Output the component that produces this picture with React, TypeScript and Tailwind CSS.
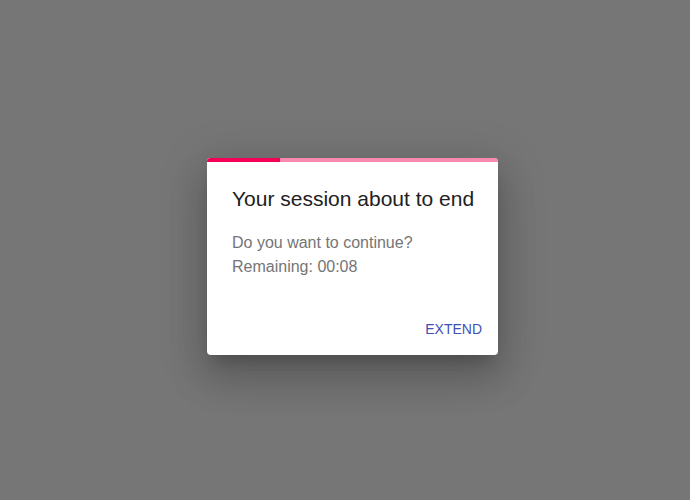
import React from 'react';

const SessionDialog: React.FC<{ remaining: string; progress: number }> = ({ remaining, progress }) => (
    <div className="w-[291px] bg-white rounded overflow-hidden shadow-[0_11px_15px_-7px_rgba(0,0,0,0.2),0_24px_38px_3px_rgba(0,0,0,0.14),0_9px_46px_8px_rgba(0,0,0,0.12)]">
        <div className="h-1 bg-[#f88ab0]">
            <div className="h-full bg-[#f50057]" style={{ width: `${progress}%` }} />
        </div>
        <h2 className="pl-[25px] pr-2 pt-[21px] text-[21px] leading-8 text-[#212121] whitespace-nowrap">Your session about to end</h2>
        <div className="pl-[25px] pr-6 pt-4 text-base leading-6 text-[#757575]">
            <p>Do you want to continue?</p>
            <p>Remaining: {remaining}</p>
        </div>
        <div className="flex justify-end px-2 pt-8 pb-2">
            <button className="h-9 px-2 rounded text-sm text-[#3f51b5] uppercase">
                Extend
            </button>
        </div>
    </div>
);

export default function App() {
    return (
        <div className="w-full h-[500px] bg-[#767676] flex justify-center pt-[158px] pl-[15px] font-['Liberation_Sans',Arial,sans-serif]">
            <div>
                <SessionDialog remaining="00:08" progress={25} />
            </div>
        </div>
    );
}
